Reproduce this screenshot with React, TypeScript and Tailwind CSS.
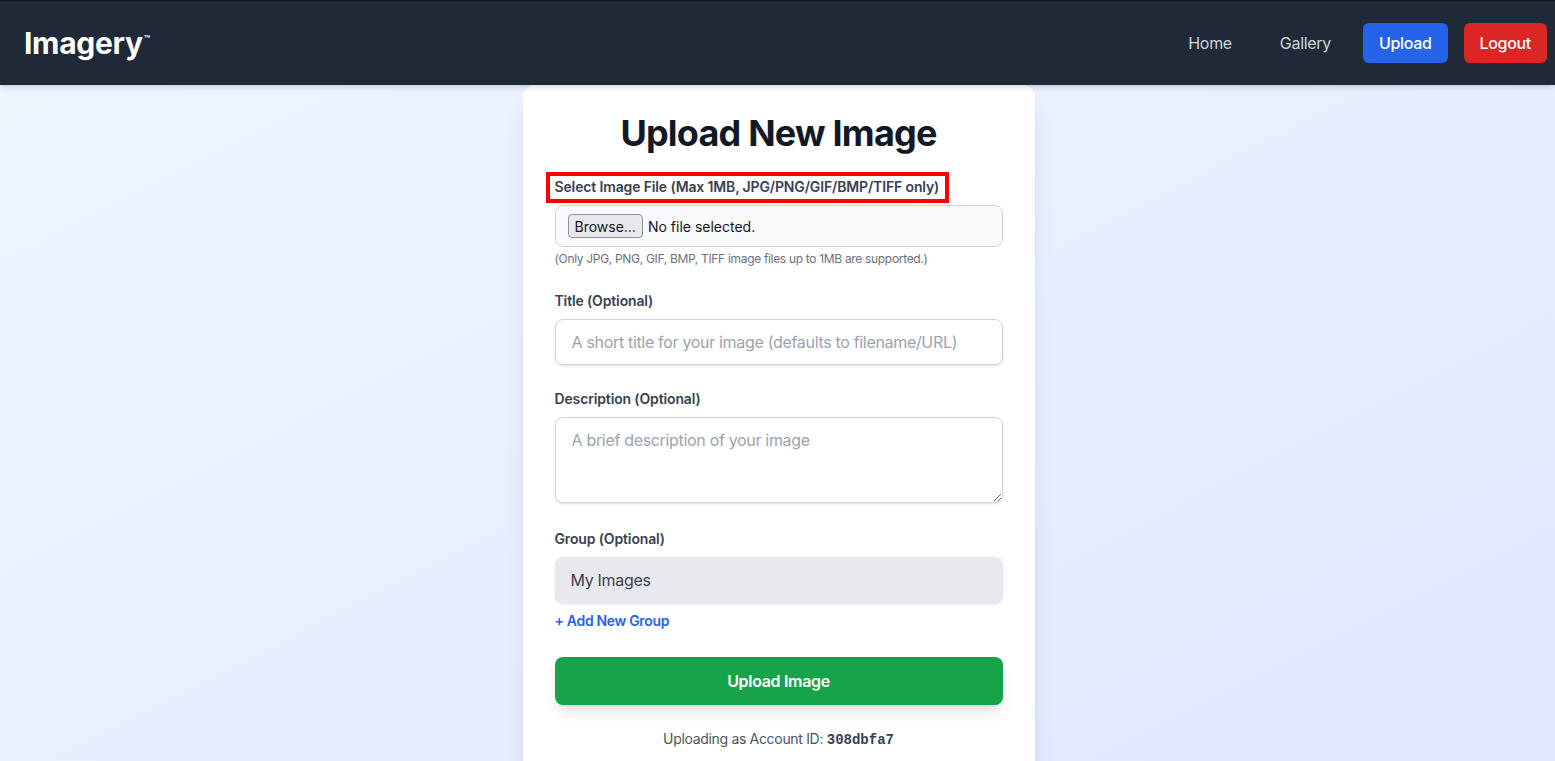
export default function App() {
  return (
    <div className="min-h-screen bg-linear-to-br from-[#eff6ff] to-[#e0e7ff] font-['Inter',_'Noto_Sans',_sans-serif] tracking-[-0.02em]">
      <header className="relative z-10 h-[85px] bg-[#1f2937] border-t border-[#111318] shadow-md flex items-center justify-between pl-6 pr-2">
        <div className="flex items-start text-white text-3xl font-bold tracking-[-0.01em]">
          Imagery<span className="text-[10px] font-semibold leading-none mt-[9px] ml-px">™</span>
        </div>
        <nav className="flex items-center gap-4 text-base">
          <a className="px-4 py-2 text-[#d1d5db]">Home</a>
          <a className="px-4 py-2 text-[#d1d5db]">Gallery</a>
          <a className="px-4 py-2 rounded-md bg-[#2563eb] text-white font-medium">Upload</a>
          <a className="px-4 py-2 rounded-md bg-[#dc2626] text-white font-medium">Logout</a>
        </nav>
      </header>

      <main className="flex justify-center pl-[2px]">
        <div className="w-[512px] bg-white rounded-xl shadow-xl px-8 pt-7 pb-10">
          <h1 className="text-4xl font-bold text-[#111827] text-center tracking-[-0.022em] mb-6">Upload New Image</h1>

          <div>
            <label className="relative flex w-fit text-sm leading-5 font-semibold text-[#374151] tracking-[-0.01em] mb-2">
              Select Image File (Max 1MB, JPG/PNG/GIF/BMP/TIFF only)
              <span className="absolute -left-[9px] -right-[10px] -top-[5px] -bottom-[6px] border-[4px] border-[#ff0000]" />
            </label>
            <div className="flex items-center gap-[5px] bg-[#f9fafb] border border-[#d1d5db] rounded-lg px-3 py-2">
              <span className="h-6 px-1.5 flex items-center bg-[#e9e9ed] border border-[#8f8f9d] rounded-[4px] text-[14px] tracking-normal text-[#15141a]">
                Browse…
              </span>
              <span className="text-[14px] tracking-normal text-[#15141a]">No file selected.</span>
            </div>
            <p className="mt-1 text-xs text-[#6b7280]">
              (Only JPG, PNG, GIF, BMP, TIFF image files up to 1MB are supported.)
            </p>
          </div>

          <div className="mt-6">
            <label className="block text-sm font-semibold text-[#374151] tracking-[-0.01em] mb-2">Title (Optional)</label>
            <input
              type="text"
              placeholder="A short title for your image (defaults to filename/URL)"
              className="block w-full h-[46px] px-4 border border-[#d1d5db] rounded-lg shadow-sm text-base text-[#1f2937] placeholder:text-[#9ca3af] outline-none"
            />
          </div>

          <div className="mt-6">
            <label className="block text-sm font-semibold text-[#374151] tracking-[-0.01em] mb-2">Description (Optional)</label>
            <textarea
              placeholder="A brief description of your image"
              className="block w-full h-[86px] px-4 py-2.5 border border-[#d1d5db] rounded-lg shadow-sm text-base text-[#1f2937] placeholder:text-[#9ca3af] outline-none resize-y"
            />
          </div>

          <div className="mt-[26px]">
            <label className="block text-sm font-semibold text-[#374151] tracking-[-0.01em] mb-2">Group (Optional)</label>
            <select className="block w-full h-[46px] px-4 rounded-lg bg-[#e9e9ed] shadow-sm text-base text-[#374151] appearance-none outline-none">
              <option>My Images</option>
            </select>
            <button className="mt-2 block text-sm font-semibold text-[#2563eb]">+ Add New Group</button>
          </div>

          <button className="mt-[26px] w-full h-12 rounded-lg bg-[#16a34a] text-white font-semibold text-base shadow-lg">
            Upload Image
          </button>

          <p className="mt-6 text-center text-sm text-[#4b5563]">
            Uploading as Account ID:{" "}
            <span className="font-['Liberation_Mono',_monospace] font-bold text-[#374151] tracking-normal">308dbfa7</span>
          </p>
        </div>
      </main>
    </div>
  );
}
